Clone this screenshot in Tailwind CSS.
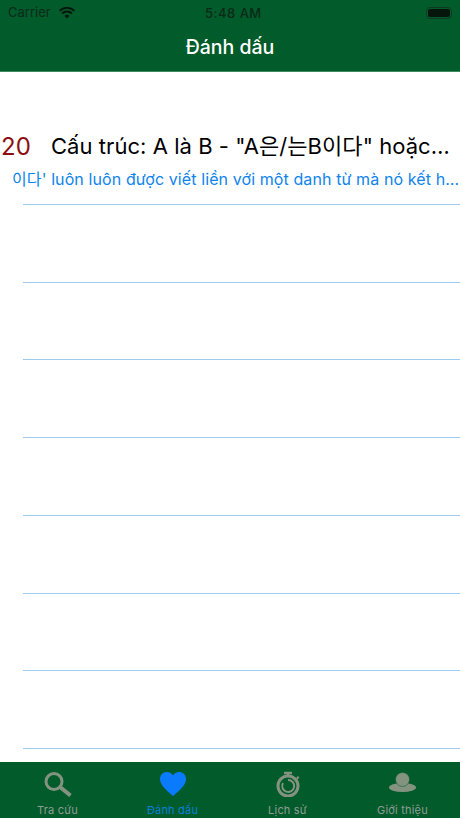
<!doctype html>
<html><head><meta charset="utf-8"><script src="https://cdn.jsdelivr.net/npm/@tailwindcss/browser@4"></script></head>
<body class="m-0">
<div class="w-[460px] h-[818px] flex flex-col overflow-hidden bg-white font-['Inter','Liberation_Sans','Noto_Sans_CJK_KR',sans-serif]">
  <header class="h-[72px] shrink-0 bg-[#015b2a] border-b border-[#3f8a5f] flex flex-col">
    <div class="h-6 relative flex items-center justify-between pl-2 pr-2 pt-px text-[13px] text-[#0b2a18]">
      <div class="flex items-center gap-2"><span>Carrier</span>
        <svg width="16" height="12" viewBox="0 0 16 12" fill="#06160d"><path d="M8 11.500 5.600 8.900a3.500 3.500 0 0 1 4.800 0ZM3.900 7.200 2.400 5.600a8.200 8.200 0 0 1 11.200 0l-1.500 1.600a6 6 0 0 0-8.200 0ZM1.200 4.400 0 3a11.800 11.800 0 0 1 16 0l-1.200 1.400a10 10 0 0 0-13.600 0Z"/></svg>
      </div>
      <span class="absolute left-[205px] top-[4px] tracking-[0.5px] font-medium">5:48 AM</span>
      <div class="w-[26px] h-3 rounded-[4px] border border-[#0f3a22] p-px"><div class="w-full h-full rounded-[2px] bg-[#06160d]"></div></div>
    </div>
    <div class="flex-1 flex items-center justify-center text-white text-[19.500px] font-medium">Đánh dấu</div>
  </header>
  <main class="flex-1">
    <div class="h-[132.800px] flex flex-col justify-end">
      <div class="flex items-center h-9">
        <span class="w-[51px] text-[24px] text-[#8b0f0f] pl-px shrink-0">20</span>
        <span class="w-[401px] truncate text-[22px] tracking-[0.05px] text-black">Cấu trúc: A là B - "A은/는B이다" hoặc "A은/는B이다"</span>
      </div>
      <div class="h-[39px] pl-3 pt-[4px] text-[16px] tracking-[0.1px] leading-5 text-[#0f84ec] truncate">이다' luôn luôn được viết liền với một danh từ mà nó kết hợp với nhau</div>
      <div class="h-px ml-[23px] bg-[#9ccbf0]"></div>
    </div>
    <div class="h-[77.750px] flex flex-col justify-end"><div class="h-px ml-[23px] bg-[#9ccbf0]"></div></div>
    <div class="h-[77.750px] flex flex-col justify-end"><div class="h-px ml-[23px] bg-[#9ccbf0]"></div></div>
    <div class="h-[77.750px] flex flex-col justify-end"><div class="h-px ml-[23px] bg-[#9ccbf0]"></div></div>
    <div class="h-[77.750px] flex flex-col justify-end"><div class="h-px ml-[23px] bg-[#9ccbf0]"></div></div>
    <div class="h-[77.750px] flex flex-col justify-end"><div class="h-px ml-[23px] bg-[#9ccbf0]"></div></div>
    <div class="h-[77.750px] flex flex-col justify-end"><div class="h-px ml-[23px] bg-[#9ccbf0]"></div></div>
    <div class="h-[77.750px] flex flex-col justify-end"><div class="h-px ml-[23px] bg-[#9ccbf0]"></div></div>
  </main>
  <nav class="h-[56px] shrink-0 bg-[#015b2a] grid grid-cols-4 text-[11px] tracking-[0.2px] text-[#8f9c94]">
    <div class="flex flex-col items-center pt-[9px]">
      <svg width="28" height="26" viewBox="0 0 28 26" fill="none" stroke="#84937f"><circle cx="10" cy="10.500" r="8" stroke-width="3"/><path d="m16 16 10.500 8.500" stroke-width="4"/></svg>
      <span class="mt-[5px]">Tra cứu</span>
    </div>
    <div class="flex flex-col items-center pt-[9px] text-[#0a7fd8]">
      <svg width="28" height="26" viewBox="0 0 28 26" fill="#0a7aff"><path d="M14 25C7 19 1 14 1 8 1 3.500 4.500 1 8 1 10.500 1 13 2.300 14 4.500 15 2.300 17.500 1 20 1 23.500 1 27 3.500 27 8 27 14 21 19 14 25Z"/></svg>
      <span class="mt-[5px]">Đánh dấu</span>
    </div>
    <div class="flex flex-col items-center pt-[9px]">
      <svg width="28" height="26" viewBox="0 0 28 26" fill="none" stroke="#84937f"><circle cx="14" cy="15" r="10" stroke-width="3"/><path d="M14 9a6 6 0 1 1-5 3" stroke-width="2"/><path d="M10 2h8M14 2v3M23 6l1.500 1.500" stroke-width="2.500"/></svg>
      <span class="mt-[5px]">Lịch sử</span>
    </div>
    <div class="flex flex-col items-center pt-[9px]">
      <svg width="28" height="26" viewBox="0 0 28 26" fill="#84937f"><ellipse cx="13.500" cy="16.500" rx="13.500" ry="4.500"/><circle cx="13.500" cy="8.500" r="7" stroke="#015b2a" stroke-width="0.500"/></svg>
      <span class="mt-[5px]">Giới thiệu</span>
    </div>
  </nav>
</div>
</body></html>
